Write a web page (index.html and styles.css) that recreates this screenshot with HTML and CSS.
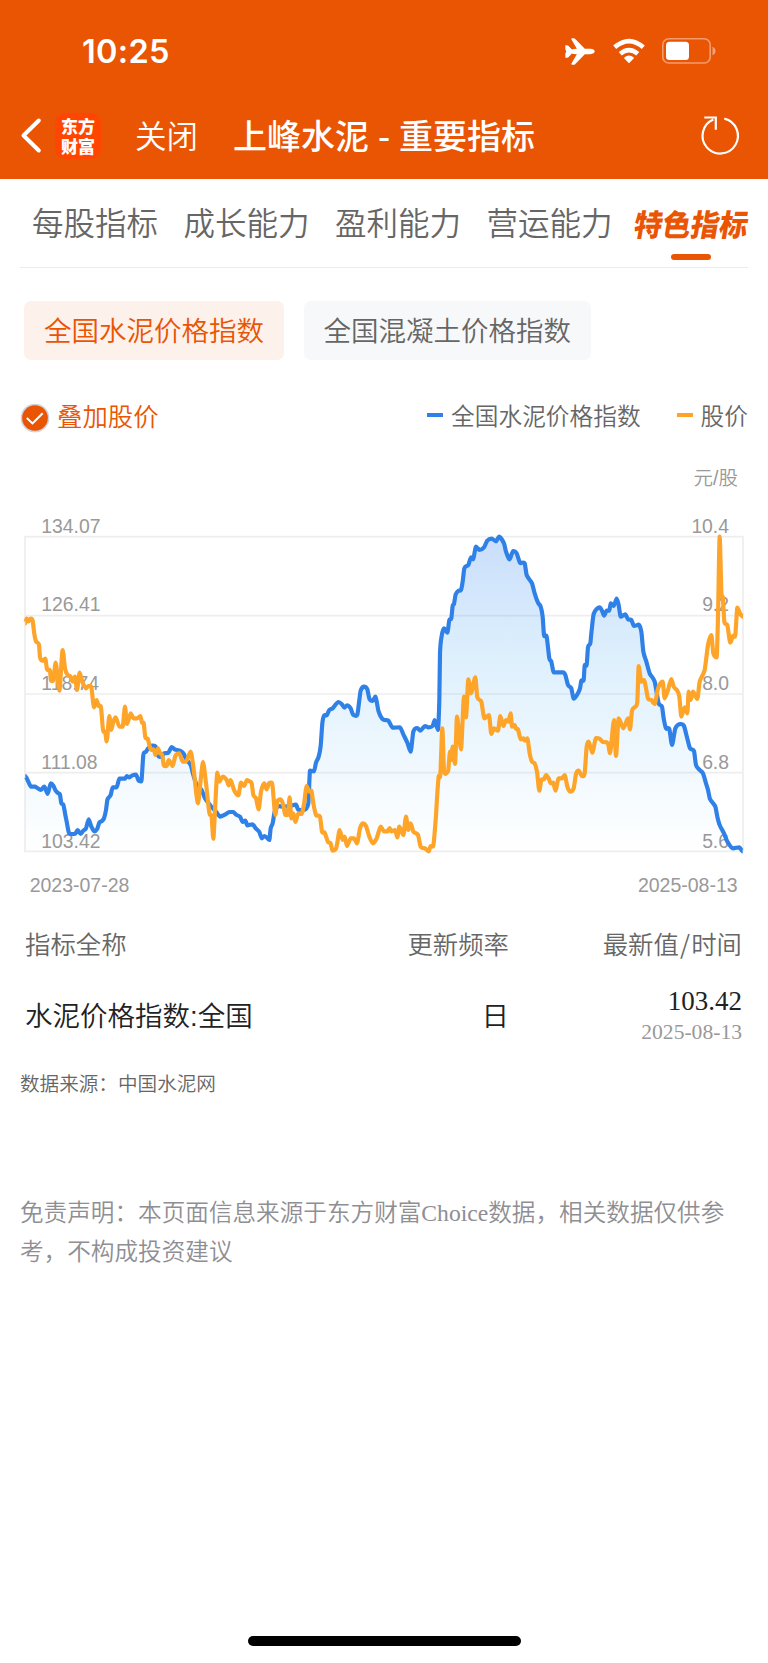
FILE: index.html
```html
<!DOCTYPE html>
<html lang="zh-CN">
<head>
<meta charset="utf-8">
<title>上峰水泥 - 重要指标</title>
<link rel="stylesheet" href="styles.css">
</head>
<body>
<div class="page">
  <header class="header">
    <div class="status">
      <span class="time">10:25</span>
      <svg class="plane" viewBox="0 0 91 82"><path d="M90 41Q90 34 76 33H60L32 4Q29 0 24 .5H21Q18 1 20 5L36 33Q26 33 21 35L11 24Q9 22 6 22H1V35L4 41 1 47V60H6Q9 60 11 58L21 47Q26 49 36 49L20 77Q18 81 21 81.500H24Q29 82 32 78L60 49H76Q90 48 90 41Z"/></svg>
      <svg class="wifi" viewBox="0 0 34 26"><path d="M17 25.200 12.300 20.500q-.5-.7.200-1.200 4.500-3.500 9 0 .7.500.2 1.200Z"/><path class="arc" d="M8.200 15.800q8.800-7.400 17.600 0M2.700 9.300q14.300-12.400 28.600 0"/></svg>
      <svg class="battery" viewBox="0 0 54 26"><rect class="shell" x=".8" y=".8" width="47.400" height="24.200" rx="6"/><rect x="4" y="3.800" width="23" height="18.200" rx="3.500"/><path class="tip" d="M50.500 8.800q3 1.200 3 4.200t-3 4.200Z"/></svg>
    </div>
    <div class="nav">
      <svg class="back" viewBox="0 0 22 36"><path d="M18.800 2.500 3.500 17.500 18.800 32.500"/></svg>
      <div class="logo">东方<br>财富</div>
      <span class="close">关闭</span>
      <h1 class="title">上峰水泥 - 重要指标</h1>
      <svg class="reload" viewBox="0 0 40 40"><path d="M24.300 2.600A17.700 17.700 0 1 1 13.400 3.500M4.300 1.500h11.500v12.300"/></svg>
    </div>
  </header>

  <nav class="tabs">
    <span class="tab">每股指标</span>
    <span class="tab">成长能力</span>
    <span class="tab">盈利能力</span>
    <span class="tab">营运能力</span>
    <span class="tab active"><b>特色指标</b></span>
  </nav>

  <div class="chips">
    <span class="chip on">全国水泥价格指数</span>
    <span class="chip">全国混凝土价格指数</span>
  </div>

  <div class="legend">
    <svg class="check" viewBox="0 0 30 30"><circle cx="15" cy="15" r="13.600"/><path d="m6.800 15 5.700 5.400 10.200-10.200"/></svg>
    <span class="overlay">叠加股价</span>
    <i class="dash blue"></i><span class="series">全国水泥价格指数</span>
    <i class="dash gold"></i><span class="series">股价</span>
  </div>
  <div class="unit">元/股</div>

  <svg class="chart" viewBox="0 0 2304 1200">
    <defs>
      <linearGradient id="fill" x1="0" y1="110" x2="0" y2="1054" gradientUnits="userSpaceOnUse">
        <stop offset="0" stop-color="#2b78f0" stop-opacity=".25"/>
        <stop offset=".42" stop-color="#209af0" stop-opacity=".14"/>
        <stop offset="1" stop-color="#209af0" stop-opacity="0"/>
      </linearGradient>
    </defs>
    <path class="grid" d="M75 110H2229V1054H75ZM75 347H2229M75 582H2229M75 818H2229"/>
    <g class="labels">
      <text x="124" y="98">134.07</text><text x="124" y="334">126.41</text><text x="124" y="571">118.74</text><text x="124" y="807">111.08</text><text x="124" y="1043">103.42</text>
      <g text-anchor="end"><text x="2187" y="98">10.4</text><text x="2187" y="334">9.2</text><text x="2187" y="571">8.0</text><text x="2187" y="807">6.8</text><text x="2187" y="1043">5.6</text></g>
      <text class="date" x="89" y="1175">2023-07-28</text><text class="date" x="2213" y="1175" text-anchor="end">2025-08-13</text>
    </g>
    <path class="area" id="area"/>
    <path class="line index" id="index"/>
    <path class="line price" id="price"/>
  </svg>

  <div class="table">
    <div class="row head"><span>指标全称</span><span>更新频率</span><span>最新值<i>/</i>时间</span></div>
    <div class="row body"><span>水泥价格指数:全国</span><span>日</span><span class="value"><b>103.42</b><small>2025-08-13</small></span></div>
  </div>
  <p class="source">数据来源：中国水泥网</p>
  <p class="notice">免责声明：本页面信息来源于东方财富Choice数据，相关数据仅供参考，不构成投资建议</p>
  <div class="home"></div>
</div>
<script src="chart.js"></script>
</body>
</html>
```
FILE: styles.css
```css
* { box-sizing: border-box; }
body { margin: 0; background: #fff; font-family: "Liberation Sans", "Noto Sans CJK SC", sans-serif; font-weight: 350; color: #666; }
.page { width: 768px; height: 1663px; display: flex; flex-direction: column; white-space: nowrap; overflow: hidden; }
svg { display: block; flex: none; overflow: visible; }

.header { height: 179px; flex: none; background: #ea5504; color: #fff; }
.status { height: 102px; display: flex; align-items: center; padding-left: 82px; }
.time { width: 483px; padding-top: 2px; font: 600 32.500px/40px Inter, sans-serif; letter-spacing: .3px; }
.status svg { fill: #fff; }
.plane { width: 30px; height: 27px; margin: 1px 17px 0 0; }
.wifi { width: 34px; height: 26px; margin-right: 16px; }
.wifi .arc { fill: none; stroke: #fff; stroke-width: 4.600; }
.battery { width: 54px; height: 26px; }
.battery .shell { fill: none; stroke: #fff; stroke-opacity: .42; stroke-width: 1.600; }
.battery .tip { fill-opacity: .45; }
.nav { height: 68px; display: flex; align-items: center; padding-left: 20px; }
.back { width: 22px; height: 36px; margin-right: 13px; fill: none; stroke: #fff; stroke-width: 4; stroke-linecap: round; stroke-linejoin: round; }
.logo { width: 46px; height: 46px; border-radius: 10px; background: #ff4500; text-align: center; padding-top: 3px; font: 900 17px/20px "Noto Sans CJK SC", sans-serif; }
.close { width: 98px; margin: -4px 0 0 34px; font-size: 31.500px; }
.title { width: 467px; margin: -3px 0 0; font: 500 34px/48px "Noto Sans CJK SC", sans-serif; word-spacing: 1.300px; }
.reload { width: 40px; height: 40px; fill: none; stroke: #fff; stroke-width: 2.200; }

.tabs { height: 89px; flex: none; margin: 0 20px; padding: 0 0 0 12px; border-bottom: 1px solid #ececec; display: flex; gap: 25.500px; font-size: 31.500px; line-height: 91px; }
.tab { width: 126px; flex: none; }
.active { width: 118px; margin-left: -5px; position: relative; color: #ea5504; }
.active b { display: block; font-size: 28.500px; font-weight: 900; transform: translateX(1px) skewX(-10deg) scaleY(1.060); line-height: 92px; }
.active::after { content: ""; position: absolute; left: 37.500px; bottom: 7px; width: 40px; height: 6px; border-radius: 3px; background: #ea5504; }

.chips { display: flex; gap: 19.500px; margin: 33px 0 0 24px; font-size: 27.500px; line-height: 61px; }
.chip { height: 59px; padding: 0 20px; border-radius: 7px; background: #f7f8fa; }
.chip.on { background: #fdf1eb; color: #ea5504; }

.legend { height: 40px; margin: 35px 20px 1px; display: flex; align-items: center; font-size: 23.700px; }
.check { width: 30px; height: 30px; margin-top: 6px; fill: #ea5504; stroke: #ced4d9; stroke-width: 1.500; }
.check path { fill: none; stroke: #fff; stroke-width: 2; }
.overlay { color: #ea5504; font-size: 25.400px; margin: -1px auto 0 7px; }
.series { margin-top: -1px; }
.dash { width: 16px; height: 4px; margin-right: 8px; }
.series + .dash { margin-left: 36px; }
.blue { background: #2f80e7; }
.gold { background: #fda429; }
.unit { height: 28px; margin: 28px 30px 0; text-align: right; font-size: 19.500px; line-height: 28px; color: #999; }

.chart { width: 768px; height: 400px; margin-top: 8px; }
.grid { fill: none; stroke: #eee; stroke-width: 5; }
.labels { font-family: "Liberation Sans", sans-serif; font-size: 58px; font-weight: 400; fill: #999; }
.date { font-size: 58.500px; }
.area { fill: url(#fill); }
.line { fill: none; stroke-width: 12.500; stroke-linejoin: round; }
.index { stroke: #2f80e7; }
.price { stroke: #fda429; }

.table { height: 148px; margin: 20px 26px 0 25px; }
.row { display: grid; grid-template-columns: 300px 184px 233px; align-items: center; }
.row > :not(:first-child) { text-align: right; }
.head { height: 46px; font: 350 25.400px/40px "Noto Sans CJK SC", sans-serif; }
.head i { font-style: normal; padding: 0 1.200px; }
.body { height: 101px; font-size: 27.500px; color: #222; }
.body > :not(.value) { margin-top: -5px; }
.value { font-family: "Liberation Serif", serif; font-weight: 400; }
.value b, .value small { display: block; font-weight: 400; font-size: 27px; line-height: 31px; }
.value small { font-size: 21.600px; color: #999; }
.source { margin: 2px 20px 0; font-size: 19.600px; line-height: 28px; }
.notice { width: 728px; margin: 96px 20px 0; white-space: normal; font: 350 23.620px/39px "Liberation Serif", "Noto Sans CJK SC", serif; color: #8e8e93; }
.home { width: 273px; height: 10px; border-radius: 5px; background: #000; margin: auto auto 17px 248px; }
```
FILE: chart.js
```js
const indexPoints = [[0, `76,828 84,843 93,860 105,860 112,864 122,870 133,860 143,882 152,850 160,857 167,872 175,880 180,884 184,910 190,914 196,945 200,965 206,996 213,1002 225,1002 233,990 242,1002 250,992 258,985 266,958 274,980 283,994 291,988 298,968 306,963 312,955 318,930 322,900 326,893 332,885 338,862 350,862 358,836 375,836 380,828 388,832 397,826 408,824 416,842 424,844 430,765 438,755 445,745 456,737 467,740 475,768 485,770 492,760 505,758 515,741 524,748 540,752 550,760 560,780 572,795 580,825 590,855 605,870 615,895 630,915 648,935 660,950 675,944 688,936 700,936 708,944 720,950 728,966 736,962 742,976 758,973 768,986 778,996`],
[750, `35,1015 43,1008 50,1012 58,1020 62,985 68,970 74,935 85,918 100,920 118,918 138,914 145,930 158,930 175,910 180,812 192,814 198,788 206,770 212,738 217,670 222,647 230,646 238,630 248,625 265,606 275,612 283,623 291,616 302,625 310,645 322,644 328,600 332,572 342,560 352,568 358,596 368,603 376,590 386,635 398,658 415,662 428,683 450,682 460,703 472,728 482,755 490,695 502,684 511,692 525,678 535,682 548,678 554,660 564,690 568,600 570,460 575,408 582,385 592,398 598,360 604,355 608,318 612,312 617,283 626,272 633,270 638,245 643,205 655,195 663,172 669,178 678,140 688,150 702,142 712,122 725,116 738,124 747,110 762,130 768,155 776,175`],
[1524, `5,178 15,153 26,160 36,188 50,190 56,225 72,250 80,280 90,308 98,320 104,350 108,405 116,410 124,475 130,485 137,517 165,517 172,525 180,555 190,565 197,596 208,583 216,565 220,542 227,540 230,497 236,495 240,442 247,430 250,400 257,342 275,322 282,332 288,347 296,332 304,332 308,310 317,318 326,296 332,315 338,350 352,343 360,358 370,360 378,378 392,374 400,395 406,455 415,485 425,520 440,545 452,610 462,620 467,655 474,685 484,687 492,735 502,685 518,672 528,678 537,712 546,745 558,753 564,795 575,810 585,820 594,850 600,870 606,897 622,920 628,950 635,975 648,1000 658,1025 675,1045 694,1042 704,1054`]];
const pricePoints = [[0, `76,370 80,356 86,364 92,356 98,362 103,402 108,424 117,434 120,472 128,482 136,476 141,508 150,512 153,542 160,540 167,488 178,572 188,450 195,505 202,524 212,530 218,545 225,530 231,570 239,518 247,545 258,565 265,558 273,558 282,622 290,600 296,618 303,622 310,695 315,695 320,724 328,648 334,690 340,665 347,652 358,680 368,680 375,620 381,672 392,640 400,655 412,655 421,648 426,668 431,670 436,712 443,716 452,748 462,750 466,765 474,745 480,760 487,765 491,795 500,798 506,780 518,798 526,768 538,760 548,785 558,785 572,755 580,800 594,910 602,840 609,786 618,850 630,945 634,945 640,1016 645,930 652,818 658,845 668,830 680,840 686,856 692,840 702,870 715,886 723,848 732,858 741,840 750,845`],
[750, `5,850 10,885 18,895 26,928 33,875 43,850 50,868 57,850 66,848 76,945 82,905 92,898 100,915 106,945 113,945 119,892 124,955 130,940 136,966 145,940 155,942 162,912 170,858 178,875 184,872 190,910 198,945 210,950 216,995 224,998 234,1026 242,1030 247,1052 258,1046 262,1028 269,990 278,1020 284,1010 291,1038 302,1015 312,1015 321,1030 330,985 338,970 348,978 358,1010 368,1030 380,1015 392,980 402,994 412,994 419,984 424,994 435,990 442,1012 448,980 460,1005 468,950 475,990 482,970 490,995 504,1005 512,1040 525,1045 536,1054 542,1038 549,1040 557,960 562,880 566,830 571,825 577,685 582,810 594,815 600,755 604,780 608,740 615,792 621,650 627,700 633,748 642,590 648,652 655,538 663,580 676,532 682,592 694,605 703,655 717,645 724,702 732,685 744,692 751,648 760,678 768,660 775,665`],
[1524, `8,640 12,680 20,675 24,686 30,688 38,718 46,715 50,722 58,715 65,760 72,785 80,790 87,815 94,872 100,840 108,838 114,825 122,835 128,850 136,848 142,872 152,835 162,835 170,825 178,860 186,875 197,865 204,822 212,812 222,828 230,820 236,740 242,725 253,758 264,714 275,716 284,726 300,730 306,760 318,660 324,768 332,655 346,685 360,655 366,688 372,632 382,620 388,605 392,498 400,545 408,540 415,570 420,596 430,600 440,612 450,565 464,545 470,595 480,570 490,537 497,560 508,572 514,590 520,650 530,622 538,640 542,575 548,600 555,575 568,597 575,545 590,510 600,435 610,405 616,460 626,472 630,350 635,110 641,290 644,290 649,365 658,375 667,428 675,408 682,405 688,323 696,340 705,350`]];

// Each series is stored in three segments with its own x offset.
const toPoints = segments => segments.flatMap(([offset, text]) =>
  text.split(' ').map(pair => {
    const [x, y] = pair.split(',').map(Number);
    return [x + offset, y];
  }));

// Lightly rounded line; tangents flatten at local peaks and troughs.
const toPath = points => {
  const slope = i => {
    const a = points[i - 1], b = points[i], c = points[i + 1];
    if (!a || !c || (b[1] - a[1]) * (c[1] - b[1]) <= 0) return 0;
    return (c[1] - a[1]) / (c[0] - a[0]);
  };
  let d = `M${points[0]}`;
  for (let i = 1; i < points.length; i++) {
    const [x0, y0] = points[i - 1], [x1, y1] = points[i];
    const h = (x1 - x0) * 0.25;
    d += `C${x0 + h} ${y0 + h * slope(i - 1)} ${x1 - h} ${y1 - h * slope(i)} ${x1} ${y1}`;
  }
  return d;
};

const indexPath = toPath(toPoints(indexPoints));
document.getElementById('index').setAttribute('d', indexPath);
document.getElementById('area').setAttribute('d', indexPath + 'L2229 1054L76 1054Z');
document.getElementById('price').setAttribute('d', toPath(toPoints(pricePoints)));
```
